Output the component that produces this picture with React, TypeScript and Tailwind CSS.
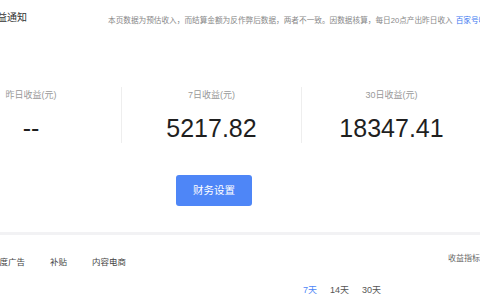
import React from "react";

const font = { fontFamily: '"Liberation Sans", "Noto Sans CJK SC", sans-serif' };

type Stat = { label: string; value: string };

const stats: Stat[] = [
  { label: "昨日收益(元)", value: "--" },
  { label: "7日收益(元)", value: "5217.82" },
  { label: "30日收益(元)", value: "18347.41" },
];

const tabs = ["百度广告", "补贴", "内容电商"];
const ranges = ["7天", "14天", "30天"];

export default function App() {
  return (
    <div className="w-[480px] h-[300px] overflow-hidden bg-white" style={font}>
      {/* 顶部：标题 + 提示 */}
      <div className="h-[36px] flex items-center whitespace-nowrap">
        <span className="ml-[-13px] text-[10px] leading-[12px] text-[#333]">收益通知</span>
        <span className="ml-[81px] mt-[5px] text-[7.65px] leading-[10px] text-[#888] shrink-0">
          本页数据为预估收入，而结算金额为反作弊后数据，两者不一致。因数据核算，每日20点产出昨日收入
          <span className="ml-[3px] text-[#3c78f0]">百家号收益说明</span>
        </span>
      </div>

      {/* 收益统计 */}
      <div className="mt-[51px] h-[56px] flex ml-[-59px]">
        {stats.map((s, i) => (
          <div
            key={s.label}
            className={
              "w-[180px] shrink-0 flex flex-col items-center pt-[2px] " +
              (i > 0 ? "border-l border-[#eeeeee]" : "")
            }
          >
            <span className="text-[9px] leading-[12px] text-[#999]">{s.label}</span>
            <span className="mt-[12px] text-[25px] leading-[30px] text-[#1f1f1f]">{s.value}</span>
          </div>
        ))}
      </div>

      <button className="mt-[32px] ml-[176px] w-[76px] h-[31px] rounded-[3px] bg-[#4e86f7] text-white text-[10.5px] flex items-center justify-center">
        财务设置
      </button>

      <div className="mt-[26px] h-[3px] bg-[#f2f2f4]" />

      {/* 分类标签 */}
      <div className="mt-[21px] flex items-start whitespace-nowrap">
        <div className="ml-[-9px] flex gap-[25px] text-[8.5px] leading-[12px] text-[#444]">
          {tabs.map((t) => (
            <span key={t}>{t}</span>
          ))}
        </div>
        <span className="ml-auto mr-[-16px] mt-[-3px] text-[8px] leading-[12px] text-[#666]">收益指标说明</span>
      </div>

      {/* 时间范围 */}
      <div className="mt-[16px] ml-[303px] flex gap-[13px] text-[9px] leading-[12px] text-[#555]">
        {ranges.map((r, i) => (
          <span key={r} className={i === 0 ? "text-[#4e86f7]" : ""}>
            {r}
          </span>
        ))}
      </div>
    </div>
  );
}
